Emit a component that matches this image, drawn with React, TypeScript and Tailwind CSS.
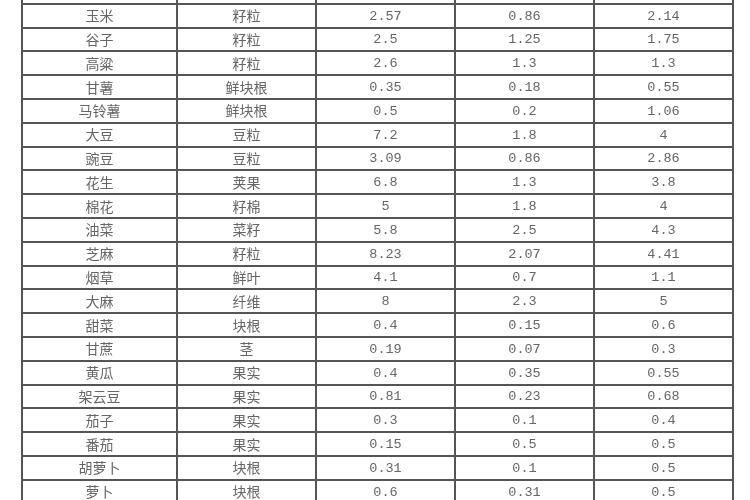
const rows: string[][] = [
  ["小麦", "籽粒", "3.0", "1.25", "2.5"],
  ["玉米", "籽粒", "2.57", "0.86", "2.14"],
  ["谷子", "籽粒", "2.5", "1.25", "1.75"],
  ["高粱", "籽粒", "2.6", "1.3", "1.3"],
  ["甘薯", "鲜块根", "0.35", "0.18", "0.55"],
  ["马铃薯", "鲜块根", "0.5", "0.2", "1.06"],
  ["大豆", "豆粒", "7.2", "1.8", "4"],
  ["豌豆", "豆粒", "3.09", "0.86", "2.86"],
  ["花生", "荚果", "6.8", "1.3", "3.8"],
  ["棉花", "籽棉", "5", "1.8", "4"],
  ["油菜", "菜籽", "5.8", "2.5", "4.3"],
  ["芝麻", "籽粒", "8.23", "2.07", "4.41"],
  ["烟草", "鲜叶", "4.1", "0.7", "1.1"],
  ["大麻", "纤维", "8", "2.3", "5"],
  ["甜菜", "块根", "0.4", "0.15", "0.6"],
  ["甘蔗", "茎", "0.19", "0.07", "0.3"],
  ["黄瓜", "果实", "0.4", "0.35", "0.55"],
  ["架云豆", "果实", "0.81", "0.23", "0.68"],
  ["茄子", "果实", "0.3", "0.1", "0.4"],
  ["番茄", "果实", "0.15", "0.5", "0.5"],
  ["胡萝卜", "块根", "0.31", "0.1", "0.5"],
  ["萝卜", "块根", "0.6", "0.31", "0.5"],
];

const widths = ["w-[155px]", "w-[139px]", "w-[139px]", "w-[139px]", "w-[139px]"];

export default function App() {
  return (
    <div className="w-[750px] h-[500px] bg-white overflow-hidden pl-[21px]">
      <div className="-mt-[19px] w-[713px] border-l-2 border-[#555555] blur-[0.4px]">
        {rows.map((r, i) => (
          <div key={i} className="flex h-[23.8px] border-b-2 border-[#555555]">
            {r.map((c, j) => (
              <div
                key={j}
                className={`${widths[j]} flex items-center justify-center border-r-2 border-[#555555] text-[#666666] ${
                  j < 2
                    ? "text-[14px] font-['Noto_Sans_CJK_SC',serif]"
                    : "text-[13.5px] pt-[2px] font-['Liberation_Mono',monospace]"
                }`}
              >
                {c}
              </div>
            ))}
          </div>
        ))}
      </div>
    </div>
  );
}
